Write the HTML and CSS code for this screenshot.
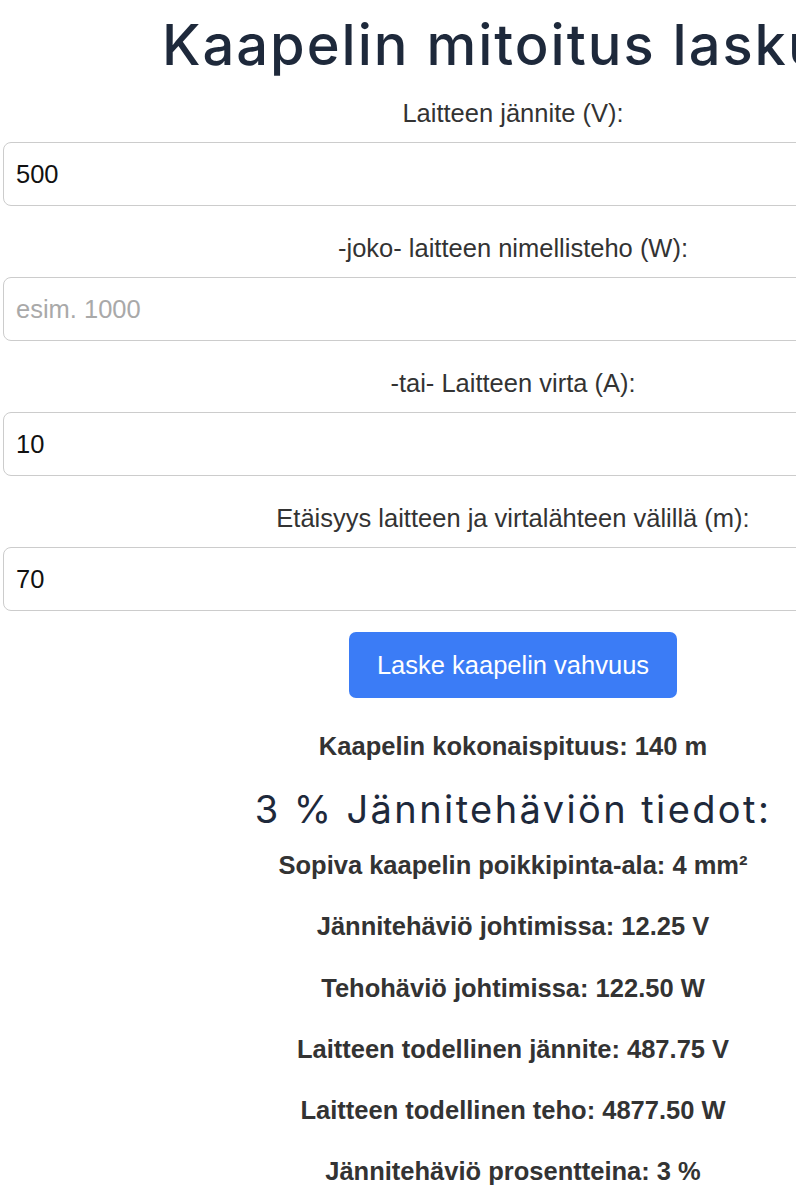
FILE: index.html
```html
<!DOCTYPE html>
<html lang="fi">
<head>
<meta charset="utf-8">
<title>Kaapelin mitoitus laskuri</title>
<link rel="stylesheet" href="styles.css">
</head>
<body>
<main class="calc">
  <h1 class="calc-title">Kaapelin mitoitus laskuri</h1>

  <form class="calc-form">
    <div class="field">
      <label class="field-label" for="voltage">Laitteen jännite (V):</label>
      <input class="field-input" id="voltage" type="text" value="500">
    </div>
    <div class="field">
      <label class="field-label" for="power">-joko- laitteen nimellisteho (W):</label>
      <input class="field-input" id="power" type="text" placeholder="esim. 1000">
    </div>
    <div class="field">
      <label class="field-label" for="current">-tai- Laitteen virta (A):</label>
      <input class="field-input" id="current" type="text" value="10">
    </div>
    <div class="field">
      <label class="field-label" for="distance">Etäisyys laitteen ja virtalähteen välillä (m):</label>
      <input class="field-input" id="distance" type="text" value="70">
    </div>
    <button class="calc-button" type="button">Laske kaapelin vahvuus</button>
  </form>

  <section class="results">
    <p class="result-line total">Kaapelin kokonaispituus: 140 m</p>
    <h2 class="results-title">3 % Jännitehäviön tiedot:</h2>
    <p class="result-line">Sopiva kaapelin poikkipinta-ala: 4 mm²</p>
    <p class="result-line">Jännitehäviö johtimissa: 12.25 V</p>
    <p class="result-line">Tehohäviö johtimissa: 122.50 W</p>
    <p class="result-line">Laitteen todellinen jännite: 487.75 V</p>
    <p class="result-line">Laitteen todellinen teho: 4877.50 W</p>
    <p class="result-line">Jännitehäviö prosentteina: 3 %</p>
  </section>
</main>
</body>
</html>
```

FILE: styles.css
```css
html, body {
  margin: 0;
  padding: 0;
  background: #ffffff;
  overflow: hidden;
}

body {
  font-family: "Liberation Sans", Arial, sans-serif;
  color: #333333;
}

.calc {
  width: 1020px;
  margin-left: 3px;
  text-align: center;
}

.calc-title {
  font-family: Inter, "Open Sans", sans-serif;
  font-weight: 500;
  font-size: 56px;
  line-height: 68px;
  letter-spacing: 2px;
  color: #1e293b;
  margin: 11px 0 0;
  white-space: nowrap;
}

.calc-form {
  margin-top: 19px;
  display: flex;
  flex-direction: column;
  align-items: center;
}

.field {
  width: 100%;
  display: flex;
  flex-direction: column;
  margin-bottom: 27px;
}

.field:last-of-type {
  margin-bottom: 22px;
}

.field-label {
  font-size: 25.5px;
  line-height: 30px;
  margin-bottom: 14px;
  color: #333333;
}

.field-input {
  box-sizing: border-box;
  width: 100%;
  height: 64px;
  padding: 0 12px;
  border: 1px solid #cccccc;
  border-radius: 8px;
  font-family: "Liberation Sans", Arial, sans-serif;
  font-size: 25.5px;
  color: #111111;
  background: #ffffff;
  outline: none;
}

.field-input::placeholder {
  color: #a9a9a9;
}

.calc-button {
  height: 66px;
  margin-top: -1px;
  padding: 0 28px;
  border: none;
  border-radius: 7px;
  background: #3b7cf6;
  color: #ffffff;
  font-family: "Liberation Sans", Arial, sans-serif;
  font-size: 25.5px;
  cursor: pointer;
}

.results {
  margin-top: 33px;
  display: flex;
  flex-direction: column;
  align-items: center;
}

.result-line {
  margin: 0 0 31.3px;
  font-size: 25.5px;
  line-height: 30px;
  font-weight: bold;
  color: #333333;
}

.result-line.total {
  margin-bottom: 26px;
}

.results-title {
  font-family: Inter, "Open Sans", sans-serif;
  font-weight: 400;
  font-size: 38px;
  line-height: 44px;
  letter-spacing: 2.4px;
  color: #1e293b;
  margin: 0 0 19px;
  white-space: nowrap;
}
```
